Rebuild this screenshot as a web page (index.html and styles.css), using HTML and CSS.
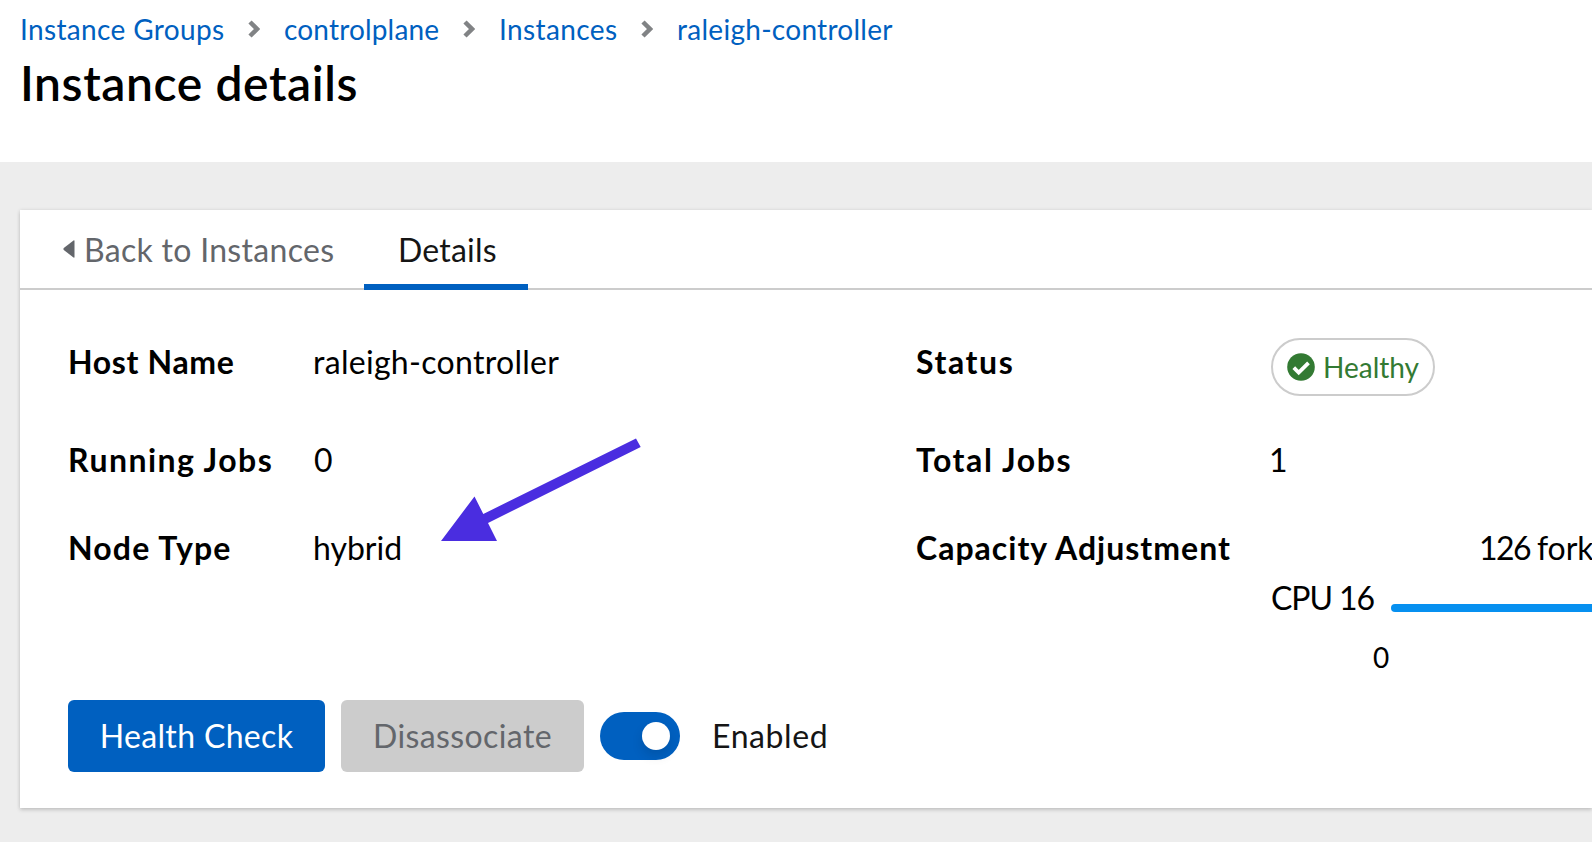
FILE: index.html
```
<!DOCTYPE html>
<html lang="en">
<head>
<meta charset="utf-8">
<title>Instance details</title>
<link rel="stylesheet" href="styles.css">
</head>
<body>
<header class="page-header">
  <nav class="breadcrumb">
    <a class="crumb crumb-groups">Instance Groups</a>
    <svg class="chevron" viewBox="0 0 12 18"><path d="M2 2l7 7-7 7"/></svg>
    <a class="crumb crumb-plane">controlplane</a>
    <svg class="chevron" viewBox="0 0 12 18"><path d="M2 2l7 7-7 7"/></svg>
    <a class="crumb crumb-instances">Instances</a>
    <svg class="chevron" viewBox="0 0 12 18"><path d="M2 2l7 7-7 7"/></svg>
    <a class="crumb crumb-host">raleigh-controller</a>
  </nav>
  <h1 class="title">Instance details</h1>
</header>
<main class="card">
  <div class="tabs">
    <a class="tab tab-back"><svg class="caret" viewBox="0 0 12 18"><path d="M11.5 1v16q0 1-1 .5L.8 10q-.8-1 0-2L10.500.5q1-.5 1 .5z"/></svg><span class="back-text">Back to Instances</span></a>
    <a class="tab tab-current">Details</a>
  </div>
  <dl class="details">
    <dt class="t-host">Host Name</dt><dd class="v-host">raleigh-controller</dd>
    <dt class="t-status">Status</dt>
    <dd><span class="pill"><svg class="check" viewBox="0 0 28 28"><circle cx="14" cy="14" r="13.800"/><path d="M6.800 14.700l4.900 4.900 9.800-9.800"/></svg><span class="healthy">Healthy</span></span></dd>
    <dt class="t-running">Running Jobs</dt><dd class="v-zero">0</dd>
    <dt class="t-total">Total Jobs</dt><dd class="v-one">1</dd>
    <dt class="t-node">Node Type</dt><dd class="v-hybrid">hybrid</dd>
    <dt class="t-capacity">Capacity Adjustment</dt>
    <dd class="capacity">
      <div class="forks"><span class="count">126 </span>forks</div>
      <div class="slider"><span class="cpu">CPU 16</span><span class="rail"></span></div>
      <div class="tick">0</div>
    </dd>
  </dl>
  <div class="actions">
    <button class="btn btn-primary">Health Check</button>
    <button class="btn btn-disabled">Disassociate</button>
    <span class="switch"><span class="knob"></span></span>
    <span class="enabled">Enabled</span>
  </div>
</main>
<svg class="arrow" viewBox="0 0 200 105"><path d="M0 104L33.500 59.500L42.300 77L195 1.500L199.700 10L47 86L56 104Z"/></svg>
</body>
</html>
```
FILE: styles.css
```
* { box-sizing: border-box; }
body {
  margin: 0;
  width: 1592px;
  height: 842px;
  overflow: hidden;
  position: relative;
  background: #ededed;
  color: #000;
  font: 32px/48px Lato, "Liberation Sans", sans-serif;
}
.page-header { height: 162px; padding: 8px 20px 0; background: #fff; }
.breadcrumb { display: flex; align-items: center; height: 42px; font-size: 28px; line-height: 42px; color: #0060c0; }
.crumb { flex: none; white-space: nowrap; }
.crumb-groups { width: 228px; letter-spacing: .35px; }
.crumb-plane { width: 179px; letter-spacing: .17px; }
.crumb-instances { width: 142px; letter-spacing: .38px; }
.crumb-host { letter-spacing: .28px; }
.chevron { flex: none; width: 12px; height: 18px; margin-right: 24px; fill: none; stroke: #818385; stroke-width: 4.500; }
.title { margin: 0; padding-top: 2px; font-size: 48px; line-height: 62px; font-weight: 600; letter-spacing: .6px; white-space: nowrap; }
.card { margin: 48px 0 0 20px; height: 598px; background: #fff; box-shadow: 0 2px 4px rgba(3,3,3,.16), 0 0 4px rgba(3,3,3,.08); }
.tabs { display: flex; height: 80px; border-bottom: 2px solid #ccc; }
.tab { white-space: nowrap; }
.tab-back { display: flex; width: 344px; padding: 16px 0 0 42px; color: #63666b; letter-spacing: .3px; }
.caret { width: 12px; height: 18px; margin: 14px 9px 0 1px; fill: #63666b; }
.tab-current { width: 164px; height: 80px; padding: 16px 0 0 34px; color: #151515; letter-spacing: .2px; border-bottom: 6px solid #0060c0; }
.details { display: grid; grid-template-columns: 245px 603px 355px 321px; grid-template-rows: 98px 88px 176px; margin: 0; padding: 48px 0 0 48px; }
dt { font-weight: 700; white-space: nowrap; }
dd { margin: 0; white-space: nowrap; }
.t-host { letter-spacing: .65px; }
.v-host { letter-spacing: .3px; }
.t-status { letter-spacing: 1.600px; }
.t-running { letter-spacing: 1.450px; }
.t-total { letter-spacing: 1.600px; }
.t-node { letter-spacing: 1.150px; }
.t-capacity { letter-spacing: 1px; }
.v-zero { padding-left: 1px; }
.v-one { text-indent: -2px; }
.pill { display: flex; align-items: center; width: 164px; height: 58px; padding-left: 14px; border: 2px solid #ccc; border-radius: 30px; color: #337a33; font-size: 28px; line-height: 42px; }
.check { width: 28px; height: 28px; margin-right: 8px; fill: #337a33; }
.check path { fill: none; stroke: #fff; stroke-width: 3.800; }
.forks { padding-left: 208px; }
.count { letter-spacing: -1.500px; }
.slider { display: flex; height: 48px; margin-top: 2px; }
.cpu { width: 120px; letter-spacing: -1.100px; }
.rail { flex: 1; height: 8px; margin-top: 30px; background: #0690f0; border-radius: 4px 0 0 4px; }
.tick { padding: 14px 0 0 102px; font-size: 28px; line-height: 42px; }
.actions { display: flex; align-items: center; height: 72px; margin-left: 48px; }
.btn { height: 72px; border: 0; border-radius: 6px; padding: 0; font: inherit; }
.btn-primary { width: 257px; background: #0060c0; color: #fff; letter-spacing: .35px; }
.btn-disabled { width: 243px; margin-left: 16px; background: #ccc; color: #63666b; letter-spacing: .4px; }
.switch { width: 80px; height: 48px; margin-left: 16px; padding: 10px 0 0 42px; border-radius: 24px; background: #0060c0; }
.knob { display: block; width: 28px; height: 28px; border-radius: 50%; background: #fff; box-shadow: 0 6px 12px rgba(3,3,3,.12); }
.enabled { margin-left: 32px; color: #151515; letter-spacing: .6px; }
.arrow { position: absolute; left: 441px; top: 437px; width: 200px; height: 105px; fill: #4a2de0; }
```
